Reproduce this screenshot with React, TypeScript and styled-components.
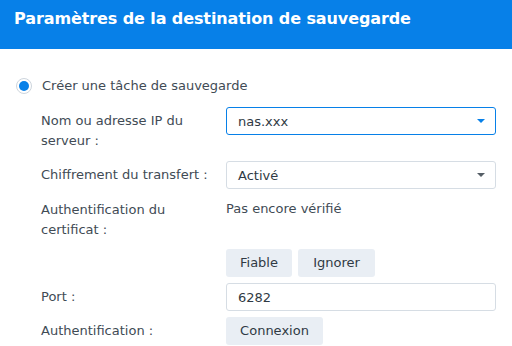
import React from 'react'
import styled, { createGlobalStyle } from 'styled-components'

const GlobalStyle = createGlobalStyle`
  html, body {
    margin: 0;
    padding: 0;
    background: #ffffff;
  }
  body {
    font-family: 'DejaVu Sans', Verdana, sans-serif;
    font-size: 13px;
    color: #414b55;
  }
`

const Wrapper = styled.div`
  width: 512px;
  height: 346px;
  overflow: hidden;
  background: #ffffff;
`

const Header = styled.div`
  height: 49px;
  background-color: #0780e8;
  padding: 9px 14px 0;
  box-sizing: border-box;
`

const Title = styled.h1`
  margin: 0;
  font-size: 16px;
  font-weight: bold;
  color: #ffffff;
  line-height: 20px;
  letter-spacing: -0.1px;
`

const Body = styled.div`
  padding: 29px 16px 0 16px;
`

const RadioRow = styled.label`
  display: flex;
  align-items: center;
  gap: 10px;
  height: 18px;
  line-height: 18px;
  margin-top: -1px;
`

const RadioOuter = styled.span`
  width: 14px;
  height: 14px;
  border: 1px solid #cdd5dd;
  border-radius: 50%;
  display: flex;
  align-items: center;
  justify-content: center;
  flex-shrink: 0;
  background: #fff;
`

const RadioDot = styled.span`
  width: 10px;
  height: 10px;
  border-radius: 50%;
  background: #0780e8;
`

const Form = styled.div`
  padding-left: 25px;
`

const Row = styled.div<{ $gap: number }>`
  display: grid;
  grid-template-columns: 185px 270px;
  margin-top: ${(p) => p.$gap}px;
`

const Label = styled.div<{ $top?: number }>`
  padding-top: ${(p) => p.$top ?? 4}px;
  line-height: 20px;
  padding-right: 8px;
`

const Field = styled.div<{ $focused?: boolean }>`
  height: 28px;
  box-sizing: border-box;
  border: 1px solid ${(p) => (p.$focused ? '#0780e8' : '#d6dde4')};
  border-radius: 3px;
  display: flex;
  align-items: center;
  justify-content: space-between;
  padding: 0 10px 0 11px;
  color: #303a44;
  background: #fff;
`

const Caret = styled.span<{ $focused?: boolean }>`
  width: 0;
  height: 0;
  border-left: 4px solid transparent;
  border-right: 4px solid transparent;
  border-top: 4px solid ${(p) => (p.$focused ? '#0780e8' : '#555e66')};
`

const Value = styled.div`
  padding-top: 4px;
  line-height: 20px;
`

const Buttons = styled.div`
  display: flex;
  gap: 6px;
`

const Button = styled.button<{ $w: number }>`
  all: unset;
  width: ${(p) => p.$w}px;
  height: 28px;
  box-sizing: border-box;
  background: #e9eef4;
  border-radius: 3px;
  color: #303a44;
  font-family: 'DejaVu Sans', Verdana, sans-serif;
  font-size: 13px;
  line-height: 28px;
  text-align: center;
`

export default function App() {
  return (
    <Wrapper>
      <GlobalStyle />
      <Header>
        <Title>Paramètres de la destination de sauvegarde</Title>
      </Header>
      <Body>
        <RadioRow>
          <RadioOuter>
            <RadioDot />
          </RadioOuter>
          <span>Créer une tâche de sauvegarde</span>
        </RadioRow>
        <Form>
          <Row $gap={12}>
            <Label>Nom ou adresse IP du serveur :</Label>
            <div>
              <Field $focused>
                <span>nas.xxx</span>
                <Caret $focused />
              </Field>
            </div>
          </Row>
          <Row $gap={10}>
            <Label>Chiffrement du transfert :</Label>
            <div>
              <Field>
                <span>Activé</span>
                <Caret />
              </Field>
            </div>
          </Row>
          <Row $gap={6}>
            <Label $top={5}>Authentification du certificat :</Label>
            <Value>Pas encore vérifié</Value>
          </Row>
          <Row $gap={9}>
            <div />
            <Buttons>
              <Button $w={66}>Fiable</Button>
              <Button $w={77}>Ignorer</Button>
            </Buttons>
          </Row>
          <Row $gap={6}>
            <Label>Port :</Label>
            <Field>
              <span>6282</span>
            </Field>
          </Row>
          <Row $gap={6}>
            <Label>Authentification :</Label>
            <Buttons>
              <Button $w={97}>Connexion</Button>
            </Buttons>
          </Row>
        </Form>
      </Body>
    </Wrapper>
  )
}
